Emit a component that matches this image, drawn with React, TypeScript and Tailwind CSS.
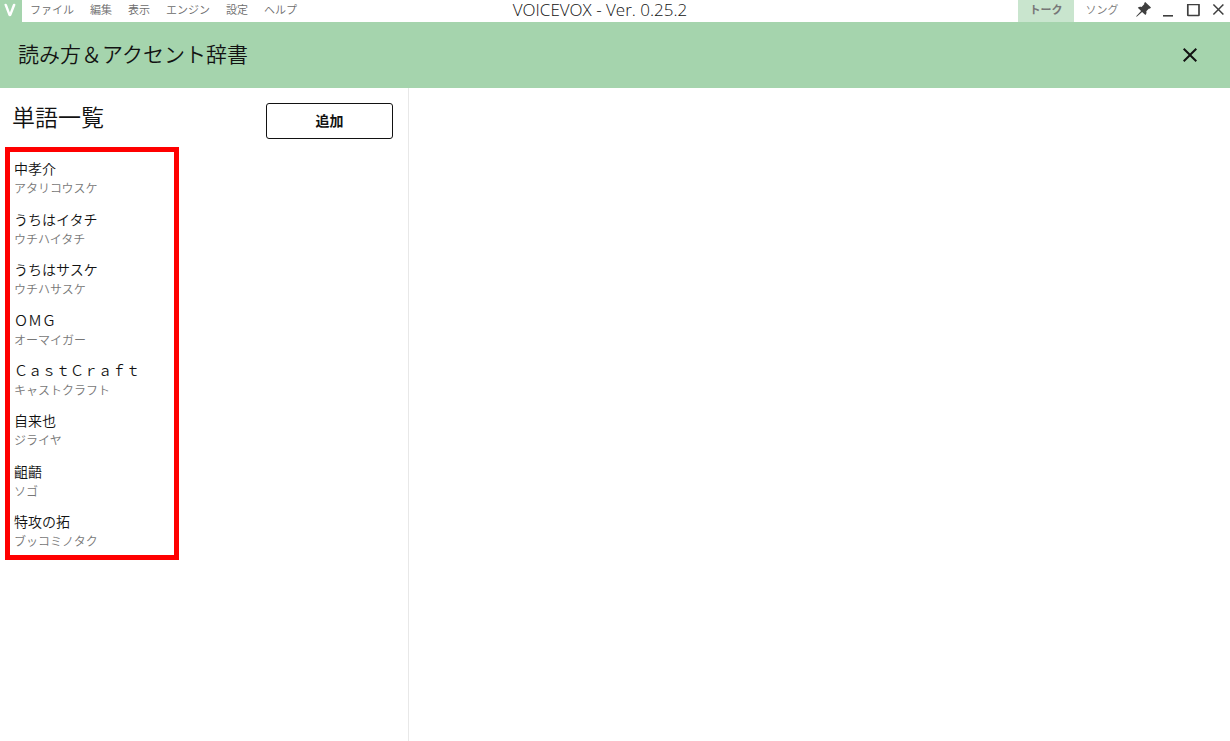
import { MdClose } from "react-icons/md";

type Word = {
  surface: string;
  yomi: string;
};

const menus = ["ファイル", "編集", "表示", "エンジン", "設定", "ヘルプ"];

const words: Word[] = [
  { surface: "中孝介", yomi: "アタリコウスケ" },
  { surface: "うちはイタチ", yomi: "ウチハイタチ" },
  { surface: "うちはサスケ", yomi: "ウチハサスケ" },
  { surface: "ＯＭＧ", yomi: "オーマイガー" },
  { surface: "ＣａｓｔＣｒａｆｔ", yomi: "キャストクラフト" },
  { surface: "自来也", yomi: "ジライヤ" },
  { surface: "齟齬", yomi: "ソゴ" },
  { surface: "特攻の拓", yomi: "ブッコミノタク" },
];

function Logo() {
  return (
    <div className="flex size-[22px] shrink-0 items-center justify-center bg-[#a5d4ad]">
      <svg viewBox="0 0 22 22" className="size-[22px]" aria-hidden="true">
        <path
          d="M4.3 4.6 Q4.8 3.6 6 3.8 Q6.8 4 7.1 4.9 L9.9 12.6 L12.7 4.9 Q13.1 3.9 14 3.8 Q15.3 3.7 15.5 4.8 L11.4 15.2 Q11 16.2 9.9 16.2 Q8.8 16.2 8.4 15.2 Z"
          fill="#fff"
        />
      </svg>
    </div>
  );
}

function WindowButtons() {
  return (
    <div className="flex h-full items-center text-[#3f3f3f]">
      <button type="button" aria-label="最前面に表示" className="flex h-full w-[26px] items-center justify-center">
        <svg viewBox="0 0 18 18" className="size-[18px]" aria-hidden="true">
          <path
            d="M11.2 0 L17 5.6 L15.8 6.8 L15 6.5 L12.3 9.3 C12.8 10.8 12.4 12.1 11.4 13 L8.1 9.9 L3 14.5 L2.2 14.8 L2.4 14 L7.1 9 L3.8 5.7 C4.8 4.7 6.2 4.4 7.6 4.9 L10.4 2.1 L10.1 1.3 Z"
            fill="currentColor"
          />
        </svg>
      </button>
      <button type="button" aria-label="最小化" className="flex h-full w-6 items-center justify-center">
        <svg viewBox="0 0 12 12" className="size-3" aria-hidden="true">
          <path d="M1 10h10v1.6H1z" fill="currentColor" />
        </svg>
      </button>
      <button type="button" aria-label="最大化" className="flex h-full w-[26px] items-center justify-center">
        <svg viewBox="0 0 14 14" className="size-3.5" fill="none" aria-hidden="true">
          <rect x="1.8" y="0.3" width="11.2" height="11.2" rx="0.5" stroke="currentColor" strokeWidth="1.7" />
        </svg>
      </button>
      <button type="button" aria-label="閉じる" className="flex h-full w-6 items-center justify-center">
        <svg viewBox="0 0 14 14" className="size-3.5" aria-hidden="true">
          <path d="M2.4 0.5 L12.4 10.5 M12.4 0.5 L2.4 10.5" stroke="currentColor" strokeWidth="1.5" />
        </svg>
      </button>
    </div>
  );
}

function TitleBar() {
  return (
    <div className="grid h-[22px] grid-cols-[1fr_auto_1fr] items-center bg-white">
      <nav className="flex items-center">
        <Logo />
        {menus.map((menu) => (
          <button key={menu} type="button" className="px-2 pb-1 text-[11px] leading-4 text-[#6b6b6b]">
            {menu}
          </button>
        ))}
      </nav>
      <div className="pr-[30px] pb-0.5 font-['Open_Sans','Noto_Sans_CJK_JP',sans-serif] text-[17px] leading-5 text-[#121212]">
        VOICEVOX - Ver. 0.25.2
      </div>
      <div className="flex h-[22px] items-center justify-end">
        <button type="button" className="h-full w-14 bg-[#c9e5ce] pb-1 text-[11px] leading-4 font-bold text-[#777]">
          トーク
        </button>
        <button type="button" className="h-full w-14 pb-1 text-[11px] leading-4 text-[#777]">
          ソング
        </button>
        <WindowButtons />
      </div>
    </div>
  );
}

function WordList() {
  return (
    <ul className="ml-[5px] flex h-[413px] w-[174px] flex-col border-5 border-[#ff0000]">
      {words.map((word) => (
        <li key={word.surface} className="flex flex-1 flex-col justify-end px-1 pb-1">
          <span className="text-sm leading-5 text-[#121212]">{word.surface}</span>
          <span className="text-xs leading-5 text-[#777]">{word.yomi}</span>
        </li>
      ))}
    </ul>
  );
}

export default function App() {
  return (
    <div className="flex min-h-screen flex-col bg-white font-['Noto_Sans_CJK_JP',sans-serif] font-[350] text-[#121212]">
      <TitleBar />
      <header className="flex h-[66px] items-center justify-between bg-[#a5d4ad] pr-7 pl-[18px]">
        <h1 className="pb-1 text-[21px] leading-8">読み方＆アクセント辞書</h1>
        <button type="button" aria-label="辞書を閉じる">
          <MdClose className="size-6" />
        </button>
      </header>
      <main className="flex flex-1">
        <section className="w-[33.25%] border-r border-[#e8e8e8]">
          <div className="flex h-[59px] items-start justify-between pt-[15px] pr-[15px] pl-3">
            <h2 className="text-[23px] leading-[26px]">単語一覧</h2>
            <button
              type="button"
              className="h-9 w-[127px] rounded-[3px] border border-[#121212] pb-0.5 text-sm font-bold"
            >
              追加
            </button>
          </div>
          <WordList />
        </section>
        <section className="flex-1" />
      </main>
    </div>
  );
}
